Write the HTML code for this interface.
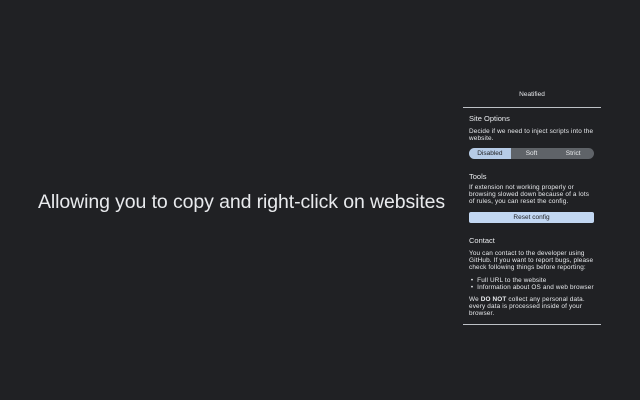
<!DOCTYPE html><html><head><style>
body{margin:0;width:640px;height:400px;background:#202124;overflow:hidden;font-family:"Liberation Sans",sans-serif;color:#e8eaed;position:relative}
.h{position:absolute;left:38px;top:191px;font-size:19.5px;white-space:nowrap;letter-spacing:-0.1px}
.p{position:absolute;left:463px;width:138px;font-size:6.5px;line-height:7px}
.t{position:absolute;left:469px;font-size:7.5px}
.line{position:absolute;left:463px;width:138px;height:1px;background:#bdc1c6}
.seg{position:absolute;left:469px;top:148px;width:125px;height:11px;border-radius:6px;background:#5f6368;display:flex;font-size:6.5px;overflow:hidden}
.seg div{flex:1;text-align:center;line-height:11px}
.btn{position:absolute;left:469px;top:212px;width:125px;height:11px;border-radius:2px;background:#c2d7f2;color:#202124;font-size:6.5px;text-align:center;line-height:11px}
.tx{position:absolute;left:469px;width:126px;font-size:6.4px;line-height:7px;letter-spacing:0.15px}
</style></head><body>
<div class="h">Allowing you to copy and right-click on websites</div>
<div class="p" style="top:91px;text-align:center">Neatified</div>
<div class="line" style="top:107px"></div>
<div class="t" style="top:114px">Site Options</div>
<div class="tx" style="top:128px">Decide if we need to inject scripts into the website.</div>
<div class="seg"><div style="background:#b6cbe6;color:#202124">Disabled</div><div>Soft</div><div>Strict</div></div>
<div class="t" style="top:172px">Tools</div>
<div class="tx" style="top:184px">If extension not working properly or browsing slowed down because of a lots of rules, you can reset the config.</div>
<div class="btn">Reset config</div>
<div class="t" style="top:236px">Contact</div>
<div class="tx" style="top:250px">You can contact to the developer using GitHub. If you want to report bugs, please check following things before reporting:</div>
<div class="tx" style="top:277px">&nbsp;•&nbsp; Full URL to the website<br>&nbsp;•&nbsp; Information about OS and web browser</div>
<div class="tx" style="top:296px">We <b>DO NOT</b> collect any personal data. every data is processed inside of your browser.</div>
<div class="line" style="top:324px"></div>
</body></html>
